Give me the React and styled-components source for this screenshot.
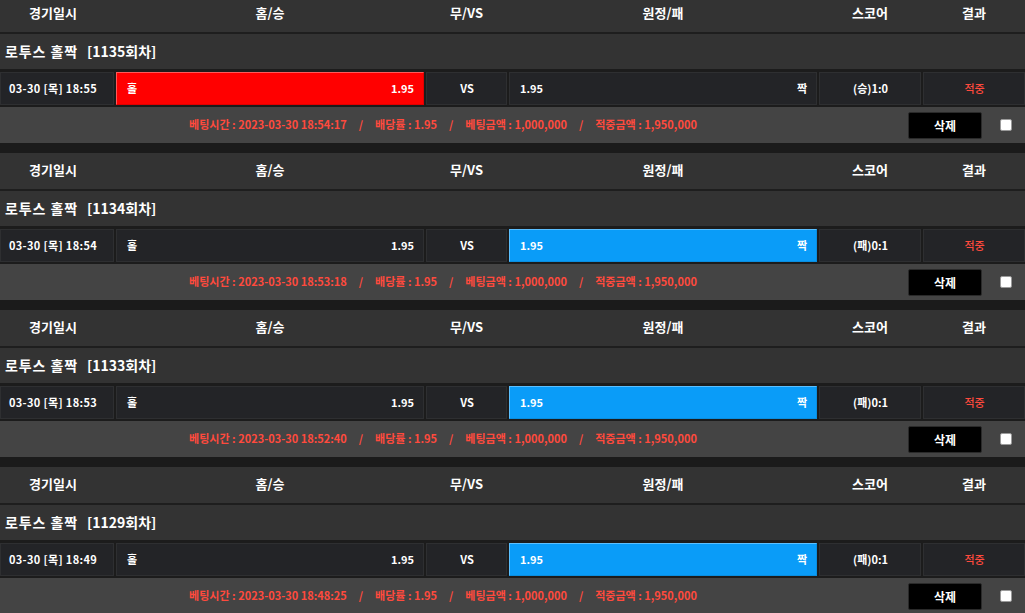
import React from "react";
import styled, { createGlobalStyle } from "styled-components";

const Global = createGlobalStyle`
  html, body { margin: 0; padding: 0; overflow: hidden; background: #1b1b1b; }
  body { font-family: "Noto Sans CJK KR", "Noto Sans", sans-serif; }
  * { box-sizing: border-box; }
`;

const Page = styled.div`
  margin-top: -4px;
  width: 1025px;
  display: flex;
  flex-direction: column;
  gap: 10px;
`;

const Block = styled.section`
  display: flex;
  flex-direction: column;
  background: #1c1c1c;
`;

const cols = "114fr 308fr 81fr 308fr 102fr 102fr";

const HeaderRow = styled.div`
  display: grid;
  grid-template-columns: ${cols};
  column-gap: 2px;
  height: 38px;
  background: #333333;
  border-bottom: 2px solid #1e1e1e;
`;

const HeaderCell = styled.div`
  display: flex;
  align-items: center;
  justify-content: center;
  color: #ffffff;
  font-size: 13px;
  font-weight: 700;
  padding-bottom: 3px;
  padding-right: ${(p) => (p.$first ? "8px" : "0")};
`;

const TitleRow = styled.div`
  height: 35px;
  background: #333333;
  display: flex;
  align-items: center;
  padding-left: 5px;
  padding-bottom: 2px;
  color: #ffffff;
  font-size: 14px;
  font-weight: 700;
  white-space: nowrap;
`;

const GameName = styled.span`
  letter-spacing: 0.9px;
  margin-right: 9px;
`;

const MatchRow = styled.div`
  display: grid;
  grid-template-columns: ${cols};
  column-gap: 2px;
  padding: 3px 0 2px;
  background: #1c1c1c;
`;

const Cell = styled.div`
  height: 33px;
  display: flex;
  align-items: center;
  justify-content: ${(p) => p.$justify || "center"};
  padding: 0 9px 1px 10px;
  background: ${(p) =>
    p.$pick === "home" ? "#ff0000" : p.$pick === "away" ? "#0a9cf8" : "#232427"};
  border: 1px solid
    ${(p) =>
      p.$pick === "home" ? "#e00000" : p.$pick === "away" ? "#0a8ee0" : "#2e2f31"};
  border-top-color: ${(p) =>
    p.$pick === "home" ? "#ff5a5a" : p.$pick === "away" ? "#5cc0ff" : "#2e2f31"};
  border-left-color: ${(p) =>
    p.$pick === "home" ? "#ff5a5a" : p.$pick === "away" ? "#5cc0ff" : "#2e2f31"};
  color: ${(p) => (p.$red ? "#ff4a3d" : "#ffffff")};
  font-size: 11px;
  font-weight: ${(p) => (p.$red ? 500 : 700)};
  white-space: nowrap;
`;

const DateCell = styled(Cell)`
  padding: 0 8px 1px 0;
  letter-spacing: 0.35px;
`;

const FooterRow = styled.div`
  height: 36px;
  background: #444444;
  display: flex;
  align-items: center;
  padding-right: 13px;
`;

const Info = styled.div`
  flex: 1;
  display: flex;
  justify-content: center;
  color: #ff4a3d;
  font-size: 11px;
  font-weight: 700;
  white-space: nowrap;
  padding-bottom: 2px;
`;

const Sep = styled.span`
  margin: 0 12px;
`;

const DeleteButton = styled.button`
  margin-left: 22px;
  width: 74px;
  height: 27px;
  background: #000000;
  border: 1px solid #2a2a2a;
  border-radius: 2px;
  color: #ffffff;
  font-family: inherit;
  font-size: 12px;
  font-weight: 700;
  padding: 0;
  cursor: pointer;
`;

const Check = styled.input.attrs({ type: "checkbox" })`
  appearance: none;
  margin: 0 0 0 18px;
  width: 12px;
  height: 12px;
  background: #ffffff;
  border: 1px solid #9a9a9a;
  border-radius: 2px;
`;

const bets = [
  { round: 1135, time: "03-30 [목] 18:55", pick: "home", score: "(승)1:0", betTime: "2023-03-30 18:54:17" },
  { round: 1134, time: "03-30 [목] 18:54", pick: "away", score: "(패)0:1", betTime: "2023-03-30 18:53:18" },
  { round: 1133, time: "03-30 [목] 18:53", pick: "away", score: "(패)0:1", betTime: "2023-03-30 18:52:40" },
  { round: 1129, time: "03-30 [목] 18:49", pick: "away", score: "(패)0:1", betTime: "2023-03-30 18:48:25" },
];

const headers = ["경기일시", "홈/승", "무/VS", "원정/패", "스코어", "결과"];

function BetBlock({ bet }) {
  return (
    <Block>
      <HeaderRow>
        {headers.map((h, i) => (
          <HeaderCell key={h} $first={i === 0}>
            {h}
          </HeaderCell>
        ))}
      </HeaderRow>
      <TitleRow>
        <GameName>로투스 홀짝</GameName>
        <span>[{bet.round}회차]</span>
      </TitleRow>
      <MatchRow>
        <DateCell>{bet.time}</DateCell>
        <Cell $justify="space-between" $pick={bet.pick === "home" ? "home" : undefined}>
          <span>홀</span>
          <span>1.95</span>
        </Cell>
        <Cell>VS</Cell>
        <Cell $justify="space-between" $pick={bet.pick === "away" ? "away" : undefined}>
          <span>1.95</span>
          <span>짝</span>
        </Cell>
        <Cell>{bet.score}</Cell>
        <Cell $red>적중</Cell>
      </MatchRow>
      <FooterRow>
        <Info>
          <span>베팅시간 : {bet.betTime}</span>
          <Sep>/</Sep>
          <span>배당률 : 1.95</span>
          <Sep>/</Sep>
          <span>베팅금액 : 1,000,000</span>
          <Sep>/</Sep>
          <span>적중금액 : 1,950,000</span>
        </Info>
        <DeleteButton>삭제</DeleteButton>
        <Check />
      </FooterRow>
    </Block>
  );
}

export default function App() {
  return (
    <>
      <Global />
      <Page>
        {bets.map((b) => (
          <BetBlock key={b.round} bet={b} />
        ))}
      </Page>
    </>
  );
}
